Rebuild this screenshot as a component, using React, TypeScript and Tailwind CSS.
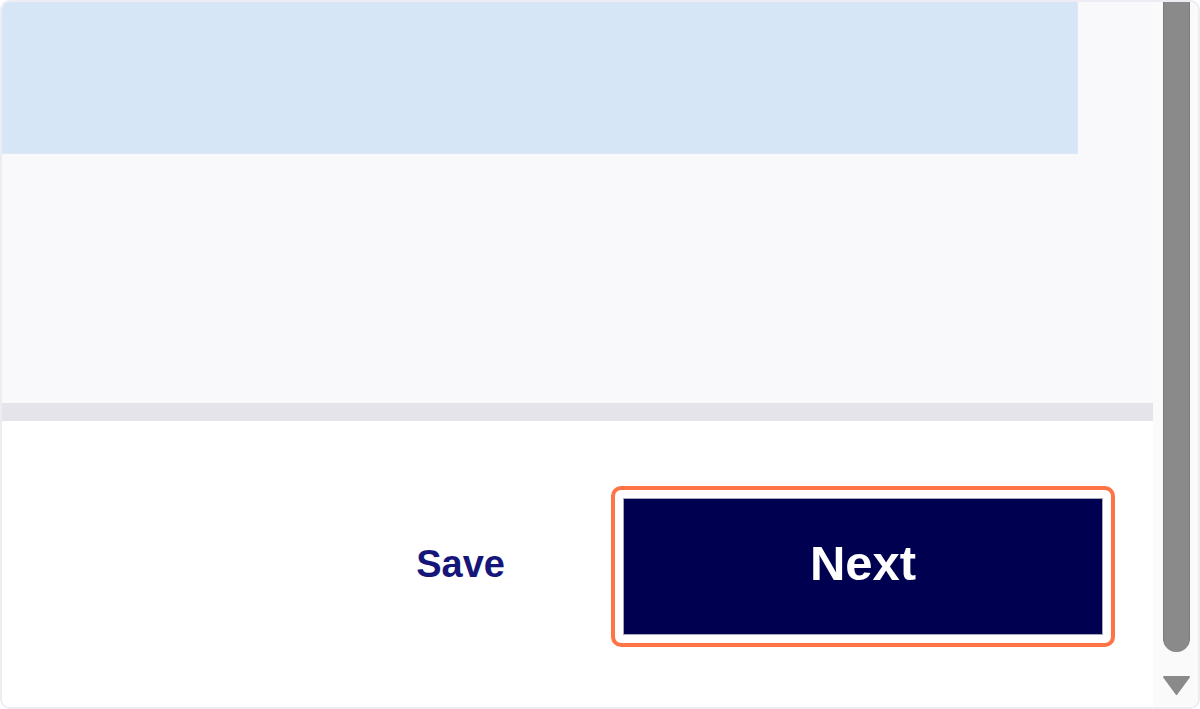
import React from 'react';

const App: React.FC = () => {
  return (
    <div className="w-[1200px] h-[709px] bg-white" style={{ fontFamily: '"Liberation Sans", Arial, sans-serif' }}>
      <div className="w-full h-full flex border-2 border-[#ececf2] rounded-[10px] overflow-hidden">
        {/* main content */}
        <div className="flex-1 flex flex-col">
          <div className="h-[401px] bg-[#f9f9fc] flex flex-col">
            <div className="w-[1076px] h-[152px] bg-[#d7e6f7] border-r border-b border-[#dde9f8]" />
          </div>
          <div className="h-[18px] bg-[#e4e4ea]" />
          <div className="flex-1 bg-white flex items-center justify-end pr-[38px] pt-[4px]">
            <button className="text-[38px] font-bold text-[#16167a] mr-[106px] leading-none -mt-[4px]">
              Save
            </button>
            <div className="border-4 border-[#ff7444] rounded-[10px] p-[8px]">
              <button className="w-[480px] h-[137px] bg-[#000050] border border-[#a8a8b8] text-white text-[49px] font-bold flex items-center justify-center pb-[4px]">
                Next
              </button>
            </div>
          </div>
        </div>
        {/* scrollbar */}
        <div className="w-[45px] bg-[#fafafa] flex flex-col items-start pl-[10px]">
          <div className="w-[27px] h-[650px] bg-[#8a8a8a] border-x border-[#7c7c7c] rounded-b-[14px]" />
          <div className="mt-[23px]">
            <svg width="27" height="20" viewBox="0 0 27 20">
              <path d="M1 2 H26 L13.5 19 Z" fill="#8a8a8a" stroke="#8a8a8a" strokeWidth="2" strokeLinejoin="round" />
            </svg>
          </div>
        </div>
      </div>
    </div>
  );
};

export default App;
